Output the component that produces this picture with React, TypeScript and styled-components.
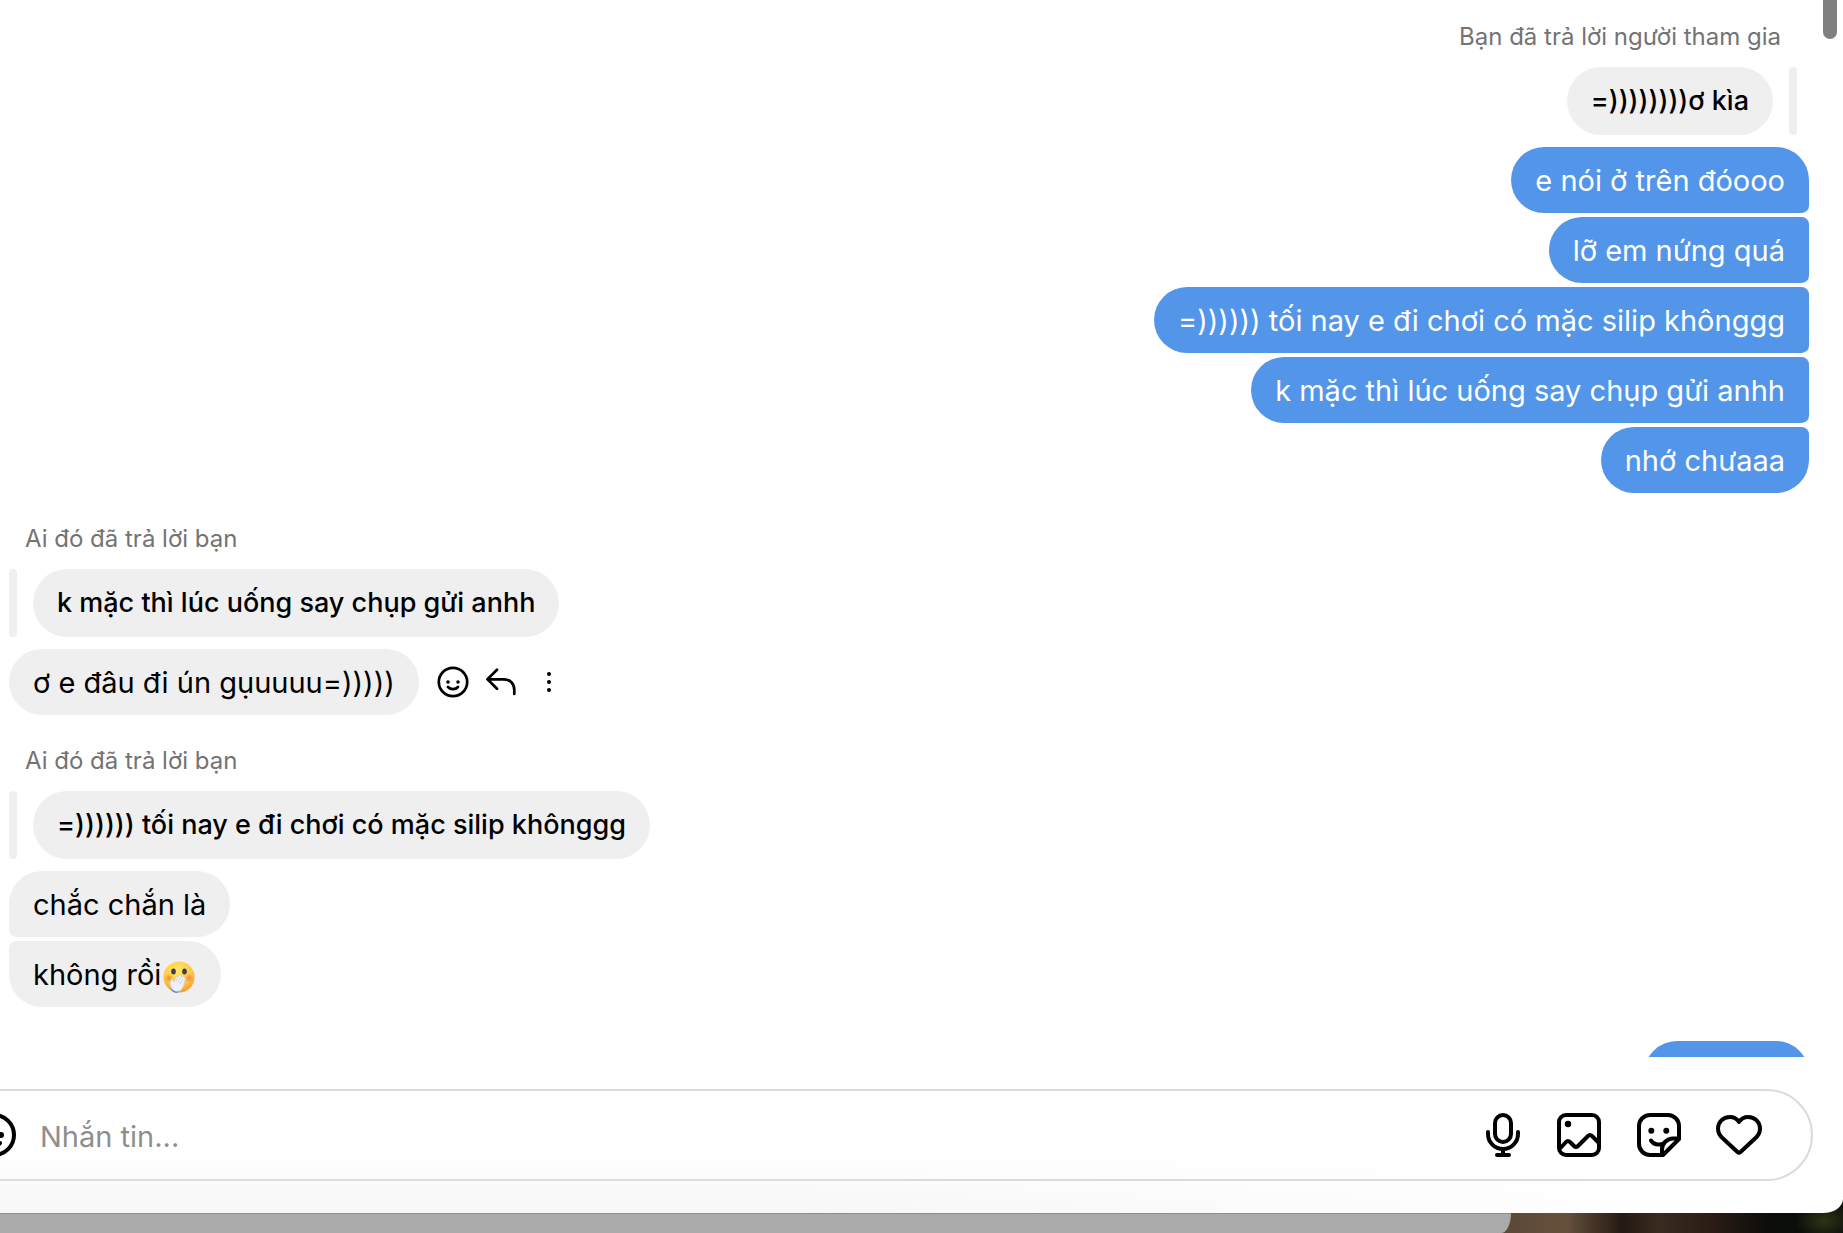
import React from "react";
import styled, { createGlobalStyle, css } from "styled-components";

const GlobalStyle = createGlobalStyle`
  * { box-sizing: border-box; }
  body {
    margin: 0;
    overflow: hidden;
    font-family: Inter, "Noto Sans", sans-serif;
    color: #000;
  }
  button { border: 0; padding: 0; background: none; color: inherit; display: flex; }
`;

const Desktop = styled.div`
  height: 100vh;
  display: flex;
  flex-direction: column;
  background:
    radial-gradient(ellipse 30px 20px at 99% 99%, #2c3512, transparent),
    linear-gradient(90deg, #5d4a36 82%, #65503c 85%, #241a12 88%, #3a2a20 90%, #2a1b14 93%, #0c0d0b 96%, #0a0e0d 100%);
`;

const Window = styled.main`
  position: relative;
  flex: 1;
  min-height: 0;
  display: flex;
  flex-direction: column;
  overflow: hidden;
  background:
    linear-gradient(to right, transparent 40%, #fff 92%),
    linear-gradient(to top, #f6f6f6, #fff 60px);
  border-bottom-right-radius: 20px 14px;
`;

const WindowBehind = styled.div`
  height: 20px;
  width: 82%;
  background: #aaa;
  border-top: 1px solid #8e8e8e;
  border-bottom-right-radius: 10px 20px;
`;

const Scrollbar = styled.div`
  position: absolute;
  top: 0;
  right: 6px;
  width: 14px;
  height: 39px;
  border-radius: 0 0 7px 7px;
  background: #808080;
`;

const Messages = styled.section`
  flex: 1;
  min-height: 0;
  overflow: hidden;
  display: flex;
  flex-direction: column;
  gap: 32px;
  padding: 23px 34px 0 9px;
`;

const Group = styled.div<{ $own?: boolean; $plain?: boolean }>`
  flex: none;
  display: flex;
  flex-direction: column;
  align-items: ${(p) => (p.$own ? "flex-end" : "flex-start")};
  gap: 4px;
  padding-top: ${(p) => (p.$plain ? "2px" : "0")};
`;

const ReplyLabel = styled.div<{ $own?: boolean }>`
  padding: ${(p) => (p.$own ? "0 28px 0 0" : "0 0 0 16px")};
  margin-bottom: 12px;
  font-size: 24px;
  line-height: 28px;
  color: #737373;
`;

const QuoteRow = styled.div<{ $own?: boolean }>`
  display: flex;
  flex-direction: ${(p) => (p.$own ? "row-reverse" : "row")};
  gap: 16px;
  margin-bottom: 8px;
  padding-right: ${(p) => (p.$own ? "12px" : "0")};
`;

const QuoteBar = styled.div`
  width: 8px;
  border-radius: 4px;
  background: #efefef;
`;

const Quote = styled.div`
  padding: 16px 24px;
  border-radius: 36px;
  font-size: 27px;
  font-weight: 500;
  line-height: 36px;
  background: #efefef;
`;

const Row = styled.div`
  display: flex;
  align-items: center;
  gap: 18px;
`;

const Bubble = styled.div<{ $own?: boolean; $above?: boolean; $below?: boolean }>`
  display: flex;
  align-items: center;
  min-width: 165px;
  min-height: 66px;
  padding: 16px 24px 14px;
  border-radius: 36px;
  font-size: 29px;
  line-height: 36px;
  ${(p) =>
    p.$own
      ? css`
          background: #5295e9;
          color: #fff;
          ${p.$above && "border-top-right-radius: 8px;"}
          ${p.$below && "border-bottom-right-radius: 8px;"}
        `
      : css`
          background: #efefef;
          ${p.$above && "border-top-left-radius: 8px;"}
          ${p.$below && "border-bottom-left-radius: 8px;"}
        `}
`;

const Actions = styled.div`
  display: flex;
  gap: 16px;
`;

const Composer = styled.form`
  flex: none;
  display: flex;
  align-items: center;
  gap: 32px;
  height: 92px;
  margin: 32px 30px 32px -60px;
  padding: 0 48px 0 28px;
  border: 2px solid #dbdbdb;
  border-radius: 46px;
`;

const Field = styled.input`
  flex: 1;
  min-width: 0;
  margin-left: -10px;
  padding: 4px 0 0;
  border: 0;
  outline: 0;
  background: none;
  font: 29px/36px Inter, "Noto Sans", sans-serif;
  &::placeholder { color: #8e8e8e; opacity: 1; }
`;

const VoiceButton = styled.button`
  margin-right: -4px;
`;

const Stroke = styled.svg<{ $weight: number }>`
  display: block;
  overflow: visible;
  fill: none;
  stroke: currentColor;
  stroke-width: ${(p) => p.$weight};
  stroke-linecap: round;
  stroke-linejoin: round;
  .dot { fill: currentColor; stroke: none; }
`;

const Big = ({ children }: { children: React.ReactNode }) => (
  <Stroke $weight={4} width="48" height="48" viewBox="0 0 48 48" aria-hidden="true">{children}</Stroke>
);
const Small = ({ children }: { children: React.ReactNode }) => (
  <Stroke $weight={2.7} width="32" height="32" viewBox="0 0 32 32" aria-hidden="true">{children}</Stroke>
);

const Emoji = () => (
  <svg width="36" height="36" viewBox="0 0 36 36" role="img" aria-label="🫢">
    <defs>
      <radialGradient id="face" cx="0.45" cy="0.3" r="0.75">
        <stop offset="0" stopColor="#ffe667" />
        <stop offset="0.6" stopColor="#fdcb45" />
        <stop offset="1" stopColor="#f0932b" />
      </radialGradient>
      <radialGradient id="blush">
        <stop offset="0" stopColor="#f4663f" stopOpacity="0.7" />
        <stop offset="1" stopColor="#f4663f" stopOpacity="0" />
      </radialGradient>
    </defs>
    <circle cx="18" cy="20" r="15.500" fill="url(#face)" />
    <circle cx="8" cy="21" r="4.500" fill="url(#blush)" />
    <circle cx="28" cy="21" r="4.500" fill="url(#blush)" />
    <ellipse cx="12.500" cy="14.500" rx="2.300" ry="3" fill="#3a3f52" />
    <ellipse cx="23.500" cy="14.500" rx="2.300" ry="3" fill="#3a3f52" />
    <path d="M10 31.500c2-1 6-1 8 2l-1 2c-3 1-6 0-7-4z" fill="#2f86ea" />
    <path d="M11 32c-1-3-3-5-1-9 0-1 2-1 2 1l1 1 2-5c1-1 2-1 2 0l2-2c1 0 2 0 1 2l2-1c1 0 1 1 1 2 2-1 2 1 1 2-1 4-2 10-6 11-3 1-5 0-7-2z" fill="#eef1f7" stroke="#c5ccd8" strokeWidth="0.600" />
    <path d="M15 25l2-5M17 26l3-6M19 27l3-5" stroke="#c5ccd8" strokeWidth="0.700" fill="none" />
  </svg>
);

export default function App() {
  return (
    <>
      <GlobalStyle />
      <Desktop>
        <Window>
          <Messages>
            <Group $own>
              <ReplyLabel $own>Bạn đã trả lời người tham gia</ReplyLabel>
              <QuoteRow $own>
                <QuoteBar />
                <Quote>=))))))))ơ kìa</Quote>
              </QuoteRow>
              <Bubble $own $below>e nói ở trên đóooo</Bubble>
              <Bubble $own $above $below>lỡ em nứng quá</Bubble>
              <Bubble $own $above $below>=)))))) tối nay e đi chơi có mặc silip khônggg</Bubble>
              <Bubble $own $above $below>k mặc thì lúc uống say chụp gửi anhh</Bubble>
              <Bubble $own $above>nhớ chưaaa</Bubble>
            </Group>
            <Group>
              <ReplyLabel>Ai đó đã trả lời bạn</ReplyLabel>
              <QuoteRow>
                <QuoteBar />
                <Quote>k mặc thì lúc uống say chụp gửi anhh</Quote>
              </QuoteRow>
              <Row>
                <Bubble>ơ e đâu đi ún gụuuuu=)))))</Bubble>
                <Actions>
                  <button type="button" aria-label="Bày tỏ cảm xúc">
                    <Small>
                      <circle cx="16" cy="16" r="14.200" />
                      <circle className="dot" cx="11" cy="16" r="1.800" />
                      <circle className="dot" cx="21" cy="16" r="1.800" />
                      <path d="M11 21c2.600 2.800 7.400 2.800 10 0" />
                    </Small>
                  </button>
                  <button type="button" aria-label="Trả lời">
                    <Small>
                      <path d="M12 3.700L2.500 13.300l9.500 9.500M2.500 13.300H19c6 0 10.300 4.500 10.300 10.500v4.200" />
                    </Small>
                  </button>
                  <button type="button" aria-label="Xem thêm">
                    <Small>
                      <circle className="dot" cx="16" cy="8" r="2" />
                      <circle className="dot" cx="16" cy="16" r="2" />
                      <circle className="dot" cx="16" cy="24" r="2" />
                    </Small>
                  </button>
                </Actions>
              </Row>
            </Group>
            <Group>
              <ReplyLabel>Ai đó đã trả lời bạn</ReplyLabel>
              <QuoteRow>
                <QuoteBar />
                <Quote>=)))))) tối nay e đi chơi có mặc silip khônggg</Quote>
              </QuoteRow>
              <Bubble $below>chắc chắn là</Bubble>
              <Bubble $above>
                không rồi
                <Emoji />
              </Bubble>
            </Group>
            <Group $own $plain>
              <Bubble $own />
            </Group>
          </Messages>
          <Composer onSubmit={(e) => e.preventDefault()}>
            <button type="button" aria-label="Biểu tượng cảm xúc">
              <Big>
                <circle cx="24" cy="24" r="20" />
                <circle className="dot" cx="16" cy="24" r="3" />
                <circle className="dot" cx="31" cy="24" r="3" />
                <path d="M17 31c3.500 4.500 10.500 4.500 13 1" />
              </Big>
            </button>
            <Field aria-label="Nhắn tin" placeholder="Nhắn tin..." />
            <VoiceButton type="button" aria-label="Ghi âm">
              <Big>
                <rect x="16" y="4" width="16" height="27" rx="8" />
                <path d="M9 21v2a15 15 0 0 0 30 0v-2M24 38v6M18 44h12" />
              </Big>
            </VoiceButton>
            <button type="button" aria-label="Ảnh">
              <Big>
                <rect x="4" y="4" width="40" height="40" rx="7" />
                <circle className="dot" cx="13" cy="13" r="3.200" />
                <path d="M5 37.500l6-6.500q2-2 4 0l4 4q2 2 4 0l10-10q2-2 4 0l6 6" />
              </Big>
            </button>
            <button type="button" aria-label="Nhãn dán">
              <Big>
                <path d="M28 44H15A11 11 0 0 1 4 33V15A11 11 0 0 1 15 4H33A11 11 0 0 1 44 15V28L28 44" />
                <path d="M44 27.500H38a11 11 0 0 0-11 11V44M16 29.500c2.500 3.500 7 5 12 3" />
                <circle className="dot" cx="16.300" cy="19.700" r="3" />
                <circle className="dot" cx="31.300" cy="19.700" r="3" />
              </Big>
            </button>
            <button type="button" aria-label="Thích">
              <Big>
                <path d="M24 11C22 8 19 6 15 6C8 6 3 11 3 17.500C3 22 5 25 8 27.500L22.500 41q1.500 1.300 3 0L40 27.500C43 25 45 22 45 17.500C45 11 40 6 33 6C29 6 26 8 24 11Z" />
              </Big>
            </button>
          </Composer>
          <Scrollbar />
        </Window>
        <WindowBehind />
      </Desktop>
    </>
  );
}
